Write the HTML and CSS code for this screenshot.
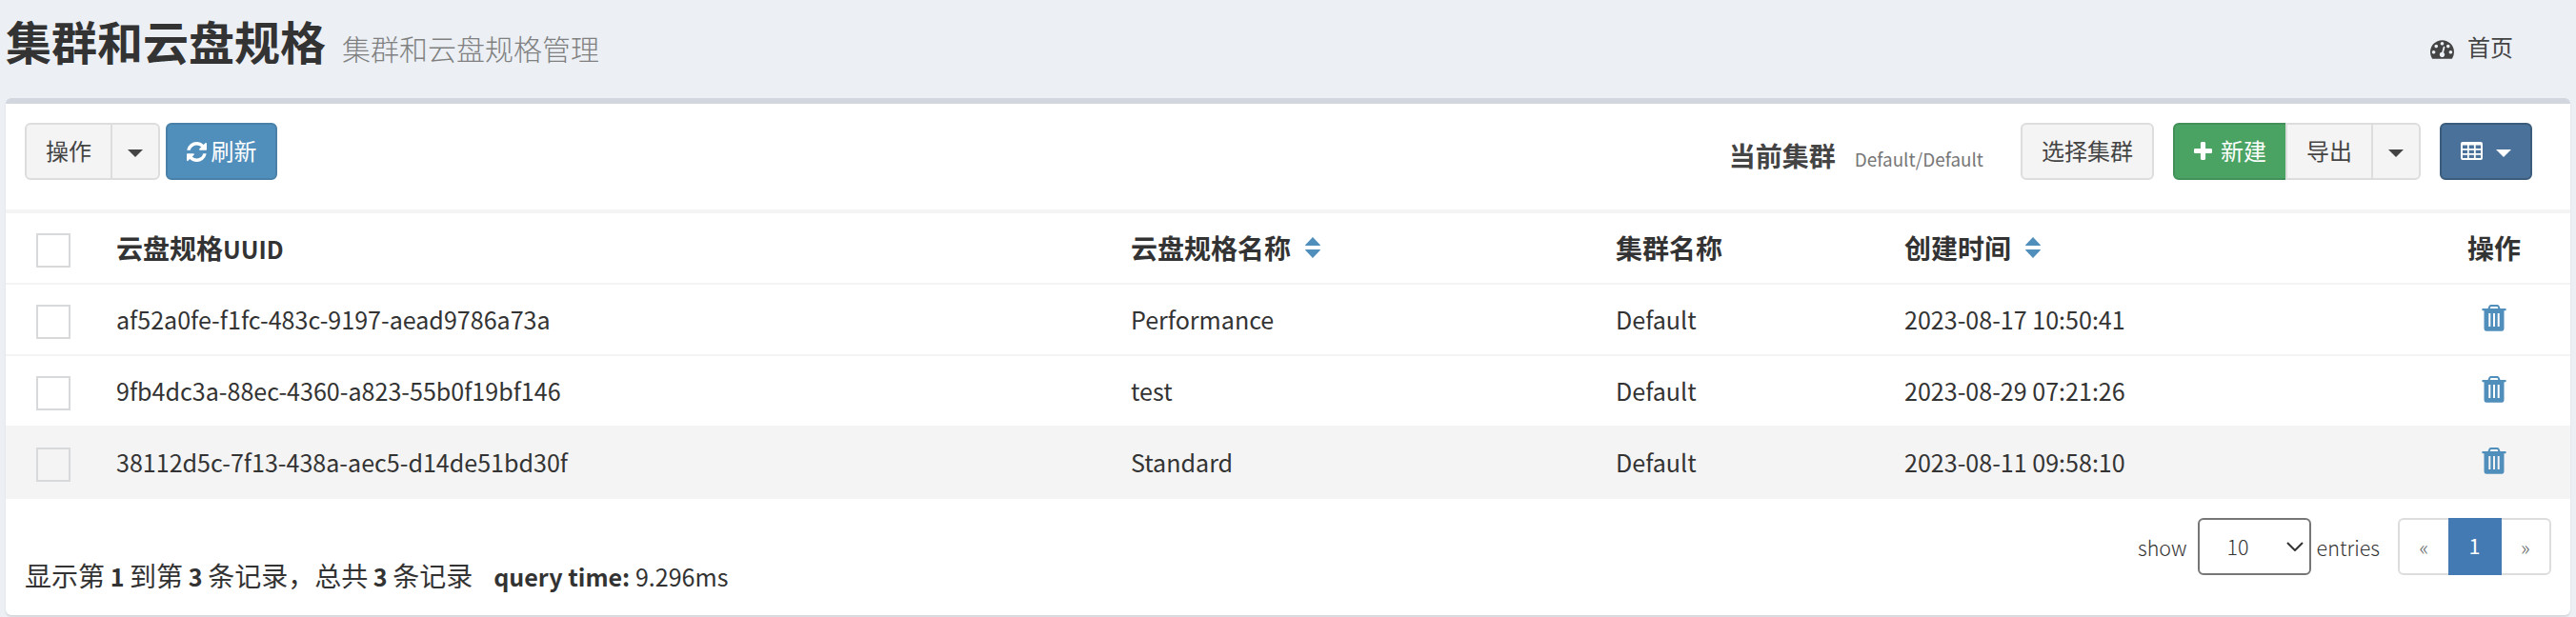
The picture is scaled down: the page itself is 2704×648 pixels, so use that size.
FILE: index.html
```html
<!DOCTYPE html>
<html lang="zh-CN">
<head>
<meta charset="utf-8">
<title>集群和云盘规格</title>
<link rel="stylesheet" href="styles.css">
</head>
<body>
<svg class="sprite" width="0" height="0" aria-hidden="true">
  <symbol id="i-dash" viewBox="0 256 1792 1408"><path fill-rule="evenodd" d="M384 1152q0-53-37.5-90.5t-90.5-37.5-90.5 37.5-37.5 90.5 37.5 90.5 90.5 37.5 90.5-37.5 37.5-90.5zm192-448q0-53-37.5-90.5t-90.5-37.5-90.5 37.5-37.5 90.5 37.5 90.5 90.5 37.5 90.5-37.5 37.5-90.5zm428 481l101-382q6-26-7.5-48.5t-38.5-29.5-48 6.5-30 39.5l-101 382q-60 5-107 43.5t-63 98.5q-20 77 20 146t117 89 146-20 89-117q16-60-6-117t-72-91zm660-33q0-53-37.5-90.5t-90.5-37.5-90.5 37.5-37.5 90.5 37.5 90.5 90.5 37.5 90.5-37.5 37.5-90.5zm-640-640q0-53-37.5-90.5t-90.5-37.5-90.5 37.5-37.5 90.5 37.5 90.5 90.5 37.5 90.5-37.5 37.5-90.5zm448 192q0-53-37.5-90.5t-90.5-37.5-90.5 37.5-37.5 90.5 37.5 90.5 90.5 37.5 90.5-37.5 37.5-90.5zm320 448q0 261-141 483-19 29-54 29h-1402q-35 0-54-29-141-221-141-483 0-182 71-348t191-286 286-191 348-71 348 71 286 191 191 286 71 348z"/></symbol>
  <symbol id="i-refresh" viewBox="128 128 1536 1536"><path d="M1639 1056q0 5-1 7-64 268-268 434.5t-478 166.5q-146 0-282.5-55t-243.5-157l-129 129q-19 19-45 19t-45-19-19-45v-448q0-26 19-45t45-19h448q26 0 45 19t19 45-19 45l-137 137q71 66 161 102t187 36q134 0 250-65t186-179q11-17 53-117 8-23 30-23h192q13 0 22.5 9.5t9.5 22.5zm25-800v448q0 26-19 45t-45 19h-448q-26 0-45-19t-19-45 19-45l138-138q-148-137-349-137-134 0-250 65t-186 179q-11 17-53 117-8 23-30 23h-199q-13 0-22.5-9.5t-9.5-22.5v-7q65-268 270-434.5t480-166.5q146 0 284 55.5t245 156.5l130-129q19-19 45-19t45 19 19 45z"/></symbol>
  <symbol id="i-plus" viewBox="192 128 1408 1408"><path d="M1600 736v192q0 40-28 68t-68 28h-416v416q0 40-28 68t-68 28h-192q-40 0-68-28t-28-68v-416h-416q-40 0-68-28t-28-68v-192q0-40 28-68t68-28h416v-416q0-40 28-68t68-28h192q40 0 68 28t28 68v416h416q40 0 68 28t28 68z"/></symbol>
  <symbol id="i-table" viewBox="0 0 23 19"><path fill-rule="evenodd" d="M2 0h19a2 2 0 0 1 2 2v15a2 2 0 0 1-2 2h-19a2 2 0 0 1-2-2v-15a2 2 0 0 1 2-2zM2 3.500v3.500h5v-3.500zM8.700 3.500v3.500h5.200v-3.500zM15.700 3.500v3.500h5.300v-3.500zM2 8.700v3.300h5v-3.300zM8.700 8.700v3.300h5.200v-3.300zM15.700 8.700v3.300h5.300v-3.300zM2 13.700v3.300h5v-3.300zM8.700 13.700v3.300h5.200v-3.300zM15.700 13.700v3.300h5.300v-3.300z"/></symbol>
  <symbol id="i-trash" viewBox="0 0 26 28"><path fill-rule="evenodd" d="M9.500 0h7q1.500 0 2 1.500l1 2.500h5.500q.6 0 .6.600v1q0 .6-.6.600h-1.500v18.500q0 3-2.500 3h-16q-2.500 0-2.500-3v-18.500h-1.500q-.6 0-.6-.6v-1q0-.6.6-.6h5.500l1-2.500q.5-1.500 2-1.500zM9.500 2l-.8 2h8.600l-.8-2zM7.300 9v14h2v-14zM12 9v14h2v-14zM16.700 9v14h2v-14z"/></symbol>
  <symbol id="i-sort" viewBox="0 0 16 22"><path d="M8 0l7.600 8q.8 1-.4 1h-14.400q-1.200 0-.4-1zM8 22l7.600-8q.8-1-.4-1h-14.400q-1.200 0-.4 1z"/></symbol>
</svg>

<header class="page-head">
  <h1 class="title">集群和云盘规格</h1>
  <span class="subtitle">集群和云盘规格管理</span>
  <a class="crumb"><svg class="ic-dash"><use href="#i-dash"/></svg><span>首页</span></a>
</header>

<main class="box">
  <div class="toolbar">
    <div class="group">
      <button class="btn btn-action">操作</button><button class="btn btn-caret"><i class="caret"></i></button>
    </div>
    <button class="btn btn-refresh"><svg class="ic-refresh"><use href="#i-refresh"/></svg><span>刷新</span></button>
    <div class="current"><b>当前集群</b><small>Default/Default</small></div>
    <button class="btn btn-pick">选择集群</button>
    <div class="group group-new">
      <button class="btn btn-new"><svg class="ic-plus"><use href="#i-plus"/></svg><span>新建</span></button><button class="btn btn-export">导出</button><button class="btn btn-caret"><i class="caret"></i></button>
    </div>
    <button class="btn btn-cols"><svg class="ic-table"><use href="#i-table"/></svg><i class="caret"></i></button>
  </div>

  <div class="table">
    <div class="row head">
      <i class="check"></i><span>云盘规格<span class="latin">UUID</span></span><span class="sortable">云盘规格名称<svg class="ic-sort"><use href="#i-sort"/></svg></span><span>集群名称</span><span class="sortable">创建时间<svg class="ic-sort"><use href="#i-sort"/></svg></span><span class="ops">操作</span>
    </div>
    <div class="row">
      <i class="check"></i><span>af52a0fe-f1fc-483c-9197-aead9786a73a</span><span>Performance</span><span>Default</span><span>2023-08-17 10:50:41</span><a class="ops"><svg class="ic-trash"><use href="#i-trash"/></svg></a>
    </div>
    <div class="row">
      <i class="check"></i><span>9fb4dc3a-88ec-4360-a823-55b0f19bf146</span><span>test</span><span>Default</span><span>2023-08-29 07:21:26</span><a class="ops"><svg class="ic-trash"><use href="#i-trash"/></svg></a>
    </div>
    <div class="row active">
      <i class="check"></i><span>38112d5c-7f13-438a-aec5-d14de51bd30f</span><span>Standard</span><span>Default</span><span>2023-08-11 09:58:10</span><a class="ops"><svg class="ic-trash"><use href="#i-trash"/></svg></a>
    </div>
  </div>

  <footer class="foot">
    <div class="summary">显示第<span class="latin"> <b>1</b> </span>到第<span class="latin"> <b>3</b> </span>条记录，总共<span class="latin"> <b>3</b> </span>条记录<span class="latin query"><b>query time:</b> 9.296ms</span></div>
    <div class="pager">
      <span class="lbl">show</span>
      <div class="select"><span>10</span><svg class="ic-chev" viewBox="0 0 18 10"><path d="M1 1l8 8 8-8" fill="none" stroke="#333" stroke-width="2"/></svg></div>
      <span class="lbl">entries</span>
      <div class="pages"><span class="pg">«</span><span class="pg on">1</span><span class="pg">»</span></div>
    </div>
  </footer>
</main>
</body>
</html>
```

FILE: styles.css
```css
* { box-sizing: border-box; }
body {
  margin: 0;
  height: 648px;
  overflow: hidden;
  background: #ecf0f5;
  color: #333;
  font-family: "Noto Sans CJK SC", sans-serif;
  font-size: 28px;
  line-height: 40px;
}
svg { display: block; fill: currentColor; flex: none; }
.sprite { position: absolute; }
.latin { font-size: 25.07px; }

.page-head {
  display: flex;
  height: 103px;
  padding: 0 66px 0 6px;
  white-space: nowrap;
}
.title { margin: 11px 0 0; font-size: 48px; line-height: 62px; font-weight: 700; }
.subtitle { margin: 29px 0 0 17px; font-size: 30px; line-height: 42px; font-weight: 300; color: #808080; }
.crumb {
  display: flex;
  margin: 29px 0 0 auto;
  gap: 14px;
  font-size: 24px;
  color: #444;
}
.ic-dash { width: 25px; height: 20px; margin-top: 13px; }

.box {
  margin: 0 6px;
  height: 543px;
  border-top: 6px solid #d2d6de;
  border-radius: 6px;
  background: #fff;
  box-shadow: 0 2px 2px rgba(0, 0, 0, .1);
}
.toolbar {
  display: flex;
  height: 115px;
  padding: 20px 40px 0 20px;
  border-bottom: 4px solid #f4f4f4;
}
.group { display: flex; margin-right: 6px; }
.btn {
  display: flex;
  align-items: center;
  justify-content: center;
  height: 60px;
  padding: 0 0 3px;
  border: 2px solid #ddd;
  border-radius: 6px;
  background: #f4f4f4;
  color: #444;
  font: 24px/36px "Noto Sans CJK SC", sans-serif;
  white-space: nowrap;
}
.group .btn + .btn { margin-left: -2px; border-top-left-radius: 0; border-bottom-left-radius: 0; }
.group .btn:not(:last-child) { border-top-right-radius: 0; border-bottom-right-radius: 0; }
.btn-action { width: 92px; }
.btn-caret { width: 52px; }
.caret {
  width: 16px;
  height: 8px;
  margin-top: 7px;
  background: currentColor;
  clip-path: polygon(0 0, 100% 0, 50% 100%);
}
.btn-refresh { width: 117px; gap: 5px; background: #508ebb; border-color: #4880a8; color: #fff; }
.ic-refresh { width: 21px; height: 21px; margin-top: 3px; }
.current { display: flex; align-items: baseline; margin-left: auto; padding-top: 14px; color: #444; }
.current b { font-weight: 700; }
.current small { margin: 0 39px 0 20px; font-size: 18.9px; color: #777; }
.btn-pick { width: 140px; margin-right: 20px; }
.group-new { margin-right: 20px; }
.btn-new { width: 120px; gap: 9px; background: #4aa363; border-color: #43915a; color: #fff; }
.btn-export { width: 92px; }
.ic-plus { width: 19px; height: 19px; margin-top: 1px; }
.btn-cols { width: 97px; gap: 14px; background: #4a7199; border-color: #3c5c7c; color: #fff; }
.ic-table { width: 23px; height: 19px; margin-top: 2px; }

.row {
  display: grid;
  grid-template-columns: 116px 1065px 509px 303px 539px 160px;
  height: 75px;
  border-top: 2px solid #f4f4f4;
  font-size: 25.07px;
  white-space: nowrap;
}
.row > span { padding-top: 16px; }
.row.head { height: 73px; border-top: 0; font-size: 28px; font-weight: 700; }
.row.active { height: 77px; background: #f4f4f4; }
.check { width: 36px; height: 36px; margin: 21px 0 0 32px; border: 2px solid #d8d9db; }
.sortable { display: flex; gap: 15px; }
.ic-sort { width: 16px; height: 22px; margin-top: 9px; color: #508ebb; }
.ops { display: flex; justify-content: center; }
.ic-trash { width: 26px; height: 28px; margin-top: 21px; color: #508ebb; }

.foot { display: flex; justify-content: space-between; padding: 20px 20px 0; white-space: nowrap; }
.summary { padding-top: 40px; }
.query { margin-left: 22px; }
.pager { display: flex; height: 60px; font-size: 21.5px; }
.lbl { padding-top: 11px; font-weight: 300; }
.select {
  display: flex;
  align-items: center;
  justify-content: space-between;
  width: 119px;
  margin: 0 6px 0 11px;
  padding: 0 6px 0 29px;
  border: 2px solid #767676;
  border-radius: 6px;
  font-weight: 300;
}
.ic-chev { width: 18px; height: 10px; }
.pages { display: flex; width: 161px; margin-left: 19px; border: 2px solid #ddd; border-radius: 6px; color: #666; }
.pg { flex: 1; padding-top: 8px; text-align: center; font-weight: 300; }
.pg.on { flex: 0 0 56px; margin: -2px 0; padding-top: 9px; background: #447ab3; color: #fff; font-weight: 400; }
```
